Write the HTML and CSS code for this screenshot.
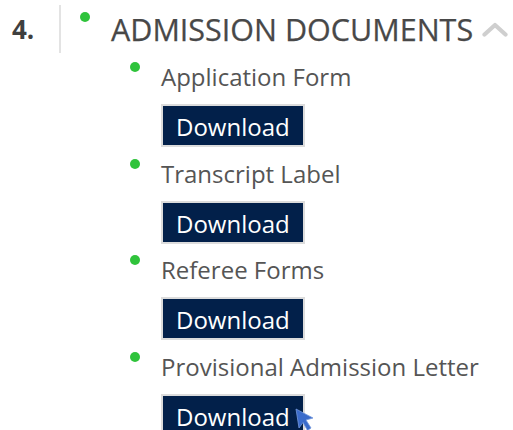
FILE: index.html
```html
<!DOCTYPE html>
<html lang="en">
<head>
<meta charset="utf-8">
<title>Admission Documents</title>
<link rel="stylesheet" href="styles.css">
</head>
<body>
  <section class="step">
    <div class="step-num">4.</div>
    <div class="step-rule"></div>
    <div class="step-body">
      <div class="step-head">
        <span class="dot"></span>
        <h2 class="step-title">ADMISSION DOCUMENTS</h2>
        <svg class="chevron" width="26" height="15" viewBox="0 0 26 15" aria-hidden="true">
          <polyline points="2.5,12.5 13,3 23.5,12.5" fill="none" stroke="#cfcfcf" stroke-width="4.2" stroke-linecap="round" stroke-linejoin="round"/>
        </svg>
      </div>
      <ul class="docs">
        <li class="doc">
          <span class="dot"></span>
          <div class="doc-main">
            <p class="doc-name">Application Form</p>
            <a class="btn" href="#">Download</a>
          </div>
        </li>
        <li class="doc">
          <span class="dot"></span>
          <div class="doc-main">
            <p class="doc-name">Transcript Label</p>
            <a class="btn" href="#">Download</a>
          </div>
        </li>
        <li class="doc">
          <span class="dot"></span>
          <div class="doc-main">
            <p class="doc-name">Referee Forms</p>
            <a class="btn" href="#">Download</a>
          </div>
        </li>
        <li class="doc">
          <span class="dot"></span>
          <div class="doc-main">
            <p class="doc-name">Provisional Admission Letter</p>
            <a class="btn" href="#">Download</a>
          </div>
        </li>
      </ul>
    </div>
  </section>
  <svg class="pointer" width="22" height="26" viewBox="0 0 22 26" aria-hidden="true">
    <polygon points="1,1 18,10 11,12 16,20 12.5,22.5 8,14.5 4,20" fill="#3b6ccb" stroke="#7398dd" stroke-width="0.8" stroke-linejoin="round"/>
  </svg>
</body>
</html>
```
FILE: styles.css
```css
html, body {
  margin: 0;
  padding: 0;
  background: #ffffff;
}

body {
  font-family: "Open Sans", "DejaVu Sans", sans-serif;
  width: 513px;
  height: 430px;
  overflow: hidden;
  position: relative;
}

.step {
  display: flex;
  align-items: flex-start;
  padding-top: 5px;
}

/* step number column, the rule sits right after it */
.step-num {
  width: 59px;
  padding-left: 12px;
  box-sizing: border-box;
  margin-top: 4px;
  font-size: 26px;
  line-height: 40px;
  font-weight: 700;
  color: #3f3f3f;
}

.step-rule {
  width: 2px;
  height: 48px;
  background: #e3e3e3;
}

.step-body {
  margin-left: 19px;
  display: flex;
  flex-direction: column;
}

.dot {
  flex: none;
  width: 10px;
  height: 10px;
  border-radius: 50%;
  background: #2fc33b;
}

.step-head {
  display: flex;
  align-items: flex-start;
  margin-top: 4px;
}

.step-head .dot {
  margin-top: 3px;
}

.step-title {
  margin: 0 0 0 21px;
  font-size: 30.5px;
  line-height: 40px;
  font-weight: 400;
  color: #484848;
  -webkit-text-stroke: 0.25px #484848;
}

.chevron {
  margin: 13px 0 0 9px;
}

.docs {
  list-style: none;
  margin: 12px 0 0 50px;
  padding: 0;
  display: flex;
  flex-direction: column;
  gap: 10.5px;
}

.doc {
  display: flex;
  align-items: flex-start;
}

.doc .dot {
  margin-top: 1px;
}

.doc-main {
  margin-left: 21px;
  display: flex;
  flex-direction: column;
  align-items: flex-start;
}

.doc-name {
  margin: 0;
  font-size: 24px;
  line-height: 32px;
  color: #555555;
}

.btn {
  margin-top: 11px;
  display: inline-block;
  padding: 4px 13px 2px;
  font-size: 24px;
  line-height: 33px;
  color: #ffffff;
  background: #02204a;
  border: 2px solid #dcdcdc;
  text-decoration: none;
}

.pointer {
  position: absolute;
  left: 295px;
  top: 408px;
}
```
